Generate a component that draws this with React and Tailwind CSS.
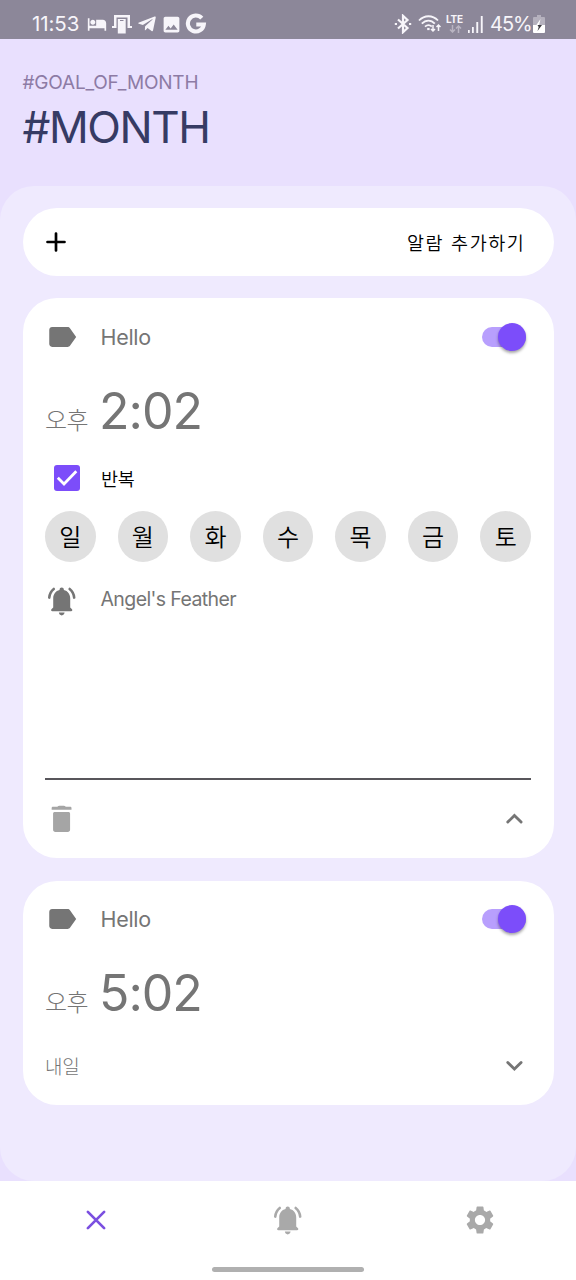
import { useState } from "react";
import { MdLabel, MdSettings, MdHotel, MdImage } from "react-icons/md";
import { FaTelegramPlane } from "react-icons/fa";

const DAYS = ["일", "월", "화", "수", "목", "금", "토"];

const ALARMS = [
  { id: 1, label: "Hello", meridiem: "오후", time: "2:02", repeat: true, sound: "Angel's Feather", next: "내일", open: true },
  { id: 2, label: "Hello", meridiem: "오후", time: "5:02", repeat: false, sound: "Angel's Feather", next: "내일", open: false },
];

const BellIcon = ({ className }) => (
  <svg viewBox="0 0 24 24" fill="currentColor" className={className}>
    <path d="M11.8 2.4c.9 0 1.5.6 1.5 1.4v.5c2.8.6 4.5 3 4.5 5.9v6.3l1.1 1.1c.8.8.3 1.6-.5 1.6H5.2c-.8 0-1.3-.8-.5-1.6l1.1-1.1v-6.3c0-2.9 1.7-5.3 4.5-5.9v-.5c0-.8.6-1.4 1.5-1.4z" />
    <path d="M9.8 20.2h4c0 1.1-.9 2-2 2s-2-.9-2-2z" />
    <path
      d="M3 9.6c.2-2.4 1.3-4.6 3.2-6.1M20.6 9.6c-.2-2.4-1.3-4.6-3.2-6.1"
      fill="none"
      stroke="currentColor"
      strokeWidth="1.8"
      strokeLinecap="round"
    />
  </svg>
);

const PlusIcon = ({ className, width = 2 }) => (
  <svg viewBox="0 0 24 24" fill="none" stroke="currentColor" strokeWidth={width} strokeLinecap="round" className={className}>
    <path d="M12 6v12M6 12h12" />
  </svg>
);

const TrashIcon = ({ className }) => (
  <svg viewBox="0 0 24 24" fill="currentColor" className={className}>
    <path d="M5.7 8.2c0-.6.5-1.1 1.1-1.1h9.8c.6 0 1.1.5 1.1 1.1v11.3c0 .9-.7 1.6-1.6 1.6H7.3c-.9 0-1.6-.7-1.6-1.6z" />
    <path d="M8.7 3.3c.5-.5.9-.7 1.5-.7h3c.6 0 1 .2 1.5.7h3.1c.5 0 .9.4.9.9v1.3H4.7V4.2c0-.5.4-.9.9-.9z" />
  </svg>
);

const ChevronIcon = ({ up }) => (
  <svg viewBox="0 0 24 24" fill="none" stroke="currentColor" strokeWidth="2" strokeLinecap="round" className="size-[34px]">
    <path d={up ? "m7.6 14.2 4.7-4.7 4.7 4.7" : "m7.6 10.2 4.7 4.7 4.7-4.7"} />
  </svg>
);

const StatusBar = () => (
  <header className="flex h-[39px] shrink-0 items-center justify-between bg-[#8c8799] pt-[9px] pr-[31px] pl-[32px] text-[#f7f5fa]">
    <div className="flex items-center">
      <span className="w-[55px] text-[20.5px] leading-none tracking-[-0.1px]">11:53</span>
      <MdHotel className="size-[20px]" />
      <svg viewBox="0 0 20 20" fill="currentColor" className="ml-[5px] size-[20px]">
        <path d="M2 1h16v11h2v2h-4.5V3.5h-11V14H0v-2h2z" />
        <path d="M5.8 5h7.9v14.5H5.8z" />
        <path d="M8 6.5h3.5" stroke="#8c8799" strokeWidth="1" />
      </svg>
      <FaTelegramPlane className="ml-[5px] size-[20px]" />
      <MdImage className="ml-[4px] size-[21px]" />
      <svg viewBox="0 0 24 24" fill="none" stroke="currentColor" strokeWidth="4.5" className="ml-[3px] size-[22px]">
        <path d="M18.3 5.6A8.7 8.7 0 1 0 20.5 12.5H12.3" />
      </svg>
    </div>
    <div className="flex items-center">
      <svg viewBox="0 0 18 20" fill="none" stroke="currentColor" strokeWidth="2.2" className="h-[20px] w-[18px]">
        <path d="m4 5.5 9.5 8.500L9 18.200V1.800L13.500 6 4 14.500" />
        <path d="M.8 10h2.200M15 10h2.200" />
      </svg>
      <svg viewBox="0 0 24 20" fill="none" stroke="currentColor" strokeWidth="1.8" className="ml-[6px] h-[20px] w-[24px]">
        <path d="M1 6.500C6.500.8 14.500.8 20 6.500M3.800 9.700c4-4.200 9.300-4.200 13 0M7 12.700c2.300-2.100 4.500-2.100 6.800-.2" />
        <path d="M9.200 15h2.400" strokeWidth="2.2" />
        <path d="M15 11v6m-2-2 2 2 2-2M20.500 17v-6m-2 2 2-2 2 2" strokeWidth="1.5" />
      </svg>
      <div className="ml-[4px] flex w-[17px] flex-col items-center">
        <span className="text-[10px] leading-[9px] font-bold tracking-[-0.2px]">LTE</span>
        <svg viewBox="0 0 14 8" fill="none" stroke="#b9b4c2" strokeWidth="1.5" className="mt-[1px] h-[8px] w-[14px]">
          <path d="M4.500 0v7M2 4.500 4.500 7 7 4.500M10.500 8V1M8 3.500 10.500 1 13 3.500" />
        </svg>
      </div>
      <svg viewBox="0 0 15 17" fill="currentColor" className="ml-[5px] h-[17px] w-[15px]">
        <path d="M0 14h1.700v3H0zM4 11h1.800v6H4zM8.300 6h1.900v11H8.300zM12.800 0h1.900v17h-1.900z" />
      </svg>
      <span className="ml-[7px] w-[43px] text-[20px] leading-none tracking-[-1px]">45%</span>
      <svg viewBox="0 0 12 18" className="h-[18px] w-[12px]">
        <path d="M4 0h4v2h3a1 1 0 0 1 1 1v7H0V3a1 1 0 0 1 1-1h3z" fill="#b5b1be" />
        <path d="M0 10h12v7a1 1 0 0 1-1 1H1a1 1 0 0 1-1-1z" fill="#fff" />
        <path d="M7.500 4 3 10.500h3z" fill="#fff" />
        <path d="M4.500 16 9 10H4.500l1.200 2z" fill="#3c3a40" />
      </svg>
    </div>
  </header>
);

const Toggle = ({ on, onChange }) => (
  <button
    role="switch"
    aria-checked={on}
    onClick={onChange}
    className="flex h-[28px] w-[44px] items-center"
  >
    <span className={`flex h-[20px] w-full items-center rounded-full ${on ? "justify-end bg-[#b89ffd]" : "justify-start bg-gray-300"}`}>
      <span className={`size-[28px] rounded-full shadow-[0_2px_3px_rgba(0,0,0,0.35)] ${on ? "bg-[#7c4dfa]" : "bg-white"}`} />
    </span>
  </button>
);

const AlarmCard = ({ alarm }) => {
  const [enabled, setEnabled] = useState(true);
  const [open, setOpen] = useState(alarm.open);
  const [repeat, setRepeat] = useState(alarm.repeat);

  return (
    <section className="rounded-[34px] bg-white px-[22.5px] pt-[21.5px] text-[#757575]">
      <div className="flex h-[34px] items-center">
        <MdLabel className="size-[34px]" />
        <span className="ml-[21.5px] flex-1 pt-[2px] text-[21.5px] leading-none tracking-[-0.3px]">{alarm.label}</span>
        <div className="mr-[5px]">
          <Toggle on={enabled} onChange={() => setEnabled(!enabled)} />
        </div>
      </div>

      <div className="mt-[27px] flex h-[62px] items-baseline">
        <span className="w-[54px] text-[24px] leading-[60px] font-light tracking-[-0.5px]">{alarm.meridiem}</span>
        <span className="text-[50px] leading-[60px] tracking-[-1px]">{alarm.time}</span>
      </div>

      {open ? (
        <>
          <div className="mt-[20.5px] flex h-[30px] items-center">
            <button
              role="checkbox"
              aria-checked={repeat}
              onClick={() => setRepeat(!repeat)}
              className="ml-[9px] flex size-[26px] items-center justify-center rounded-[3px] bg-[#7c4dfa]"
            >
              {repeat && (
                <svg viewBox="0 0 26 26" fill="none" stroke="#fff" strokeWidth="2.8" className="size-[26px]">
                  <path d="m3.800 12.800 6.200 6.200L22.300 6.300" />
                </svg>
              )}
            </button>
            <span className="ml-[21px] pt-[3px] text-[18.5px] leading-none font-[350] tracking-[-0.3px] text-black">반복</span>
          </div>

          <div className="mt-[18px] flex justify-between">
            {DAYS.map((day) => (
              <button
                key={day}
                className="flex size-[50.6px] items-center justify-center rounded-full bg-[#e0e0e0] pt-[3px] text-[24px] leading-none font-[350] text-black"
              >
                {day}
              </button>
            ))}
          </div>

          <div className="mt-[22px] flex h-[34px] items-center">
            <BellIcon className="size-[34px]" />
            <span className="ml-[21.5px] pb-[2px] text-[19.5px] leading-none tracking-[-0.6px]">{alarm.sound}</span>
          </div>

          <div className="mt-[160px] h-[2px] bg-[#58565b]" />

          <div className="flex h-[78.5px] items-center justify-between">
            <TrashIcon className="size-[34px] text-[#a5a5a5]" />
            <button onClick={() => setOpen(false)} aria-label="Collapse">
              <ChevronIcon up />
            </button>
          </div>
        </>
      ) : (
        <div className="flex h-[79.5px] items-center justify-between">
          <span className="pt-[6px] text-[19px] leading-none font-light tracking-[-0.3px]">{alarm.next}</span>
          <button onClick={() => setOpen(true)} aria-label="Expand">
            <ChevronIcon />
          </button>
        </div>
      )}
    </section>
  );
};

const BottomNav = () => (
  <nav className="flex h-[99px] shrink-0 flex-col items-center bg-white text-[#a9a9a9]">
    <div className="grid h-[78px] w-full grid-cols-3 place-items-center">
      <button aria-label="Alarms">
        <PlusIcon width={1.4} className="size-[46px] rotate-45 text-[#7b50e0]" />
      </button>
      <button aria-label="Ringing">
        <BellIcon className="size-[34px]" />
      </button>
      <button aria-label="Settings">
        <MdSettings className="size-[34px]" />
      </button>
    </div>
    <div className="mt-[8px] h-[5px] w-[152px] rounded-full bg-[#b0b0b0]" />
  </nav>
);

export default function App() {
  return (
    <div className="flex h-[1280px] w-[576px] flex-col overflow-hidden bg-[#e9e0fe] font-['Inter','Noto_Sans_CJK_KR',sans-serif]">
      <StatusBar />

      <div className="h-[146.5px] shrink-0 px-[22.5px] pt-[31px]">
        <p className="pt-px text-[19px] leading-[24px] tracking-[-0.2px] text-[#8d7ba5]">#GOAL_OF_MONTH</p>
        <h1 className="mt-[4px] text-[44px] leading-[56px] tracking-[-1.4px] text-[#363b64]">#MONTH</h1>
      </div>

      <main className="flex flex-1 flex-col gap-[22.5px] rounded-[34px] bg-[#efeafe] px-[22.5px] pt-[22.5px]">
        <button className="flex h-[67.5px] w-full shrink-0 items-center justify-between rounded-full bg-white pr-[28px] pl-[16.5px] text-black">
          <PlusIcon width={1.9} className="size-[34px]" />
          <span className="pt-[2px] text-[18.5px] leading-none font-[350] tracking-[1.6px]">알람 추가하기</span>
        </button>
        {ALARMS.map((alarm) => (
          <AlarmCard key={alarm.id} alarm={alarm} />
        ))}
      </main>

      <BottomNav />
    </div>
  );
}
